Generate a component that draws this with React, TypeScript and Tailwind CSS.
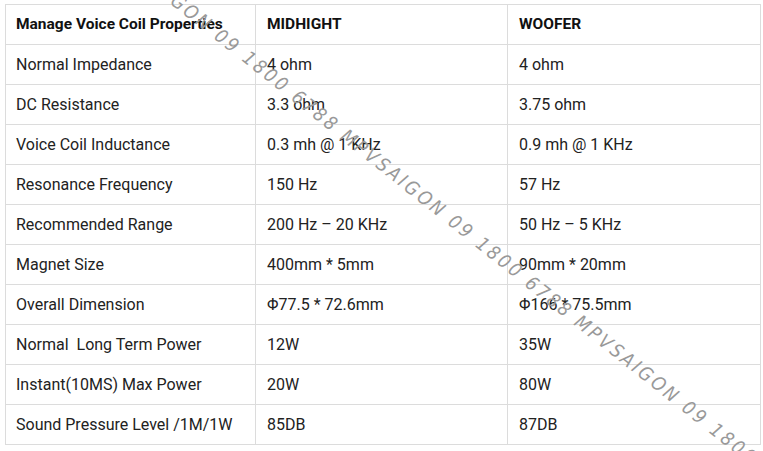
import React from 'react';

// spec rows: label, midhight, woofer
const rows: [string, string, string][] = [
  ['Normal Impedance', '4 ohm', '4 ohm'],
  ['DC Resistance', '3.3 ohm', '3.75 ohm'],
  ['Voice Coil Inductance', '0.3 mh @ 1 KHz', '0.9 mh @ 1 KHz'],
  ['Resonance Frequency', '150 Hz', '57 Hz'],
  ['Recommended Range', '200 Hz – 20 KHz', '50 Hz – 5 KHz'],
  ['Magnet Size', '400mm * 5mm', '90mm * 20mm'],
  ['Overall Dimension', 'Φ77.5 * 72.6mm', 'Φ166 * 75.5mm'],
  ['Normal\u00a0 Long Term Power', '12W', '35W'],
  ['Instant(10MS) Max Power', '20W', '80W'],
  ['Sound Pressure Level /1M/1W', '85DB', '87DB'],
];

const mark = 'MPVSAIGON 09 1800 6788 ';

const App: React.FC = () => {
  return (
    <div className="relative w-[763px] h-[451px] overflow-hidden bg-white font-['Roboto',sans-serif]">
      <div className="pt-[4px] pl-[5px]">
        <table className="border-collapse table-fixed w-[755px] text-[16px] text-[#222]">
          <colgroup>
            <col className="w-[250px]" />
            <col className="w-[252px]" />
            <col className="w-[253px]" />
          </colgroup>
          <thead>
            <tr className="h-[40px]">
              <th className="border border-[#dcdcdc] px-[10px] text-left font-bold text-[#111] text-[15.5px]">Manage Voice Coil Properties</th>
              <th className="border border-[#dcdcdc] px-[11px] text-left font-bold text-[#111] text-[15.5px]">MIDHIGHT</th>
              <th className="border border-[#dcdcdc] px-[11px] text-left font-bold text-[#111] text-[15.5px]">WOOFER</th>
            </tr>
          </thead>
          <tbody>
            {rows.map((r) => (
              <tr key={r[0]} className="h-[40px]">
                <td className="border border-[#dcdcdc] px-[10px]">{r[0]}</td>
                <td className="border border-[#dcdcdc] px-[11px]">{r[1]}</td>
                <td className="border border-[#dcdcdc] px-[11px]">{r[2]}</td>
              </tr>
            ))}
          </tbody>
        </table>
      </div>

      {/* watermark across the table */}
      <div className="pointer-events-none absolute left-[110px] top-[-64px] origin-left rotate-[38.5deg] whitespace-nowrap font-['DejaVu_Sans',sans-serif] italic text-[19px] leading-[22px] tracking-[2.8px] text-[#999] [font-stretch:condensed]">
        {mark + mark + mark + mark}
      </div>
    </div>
  );
};

export default App;
